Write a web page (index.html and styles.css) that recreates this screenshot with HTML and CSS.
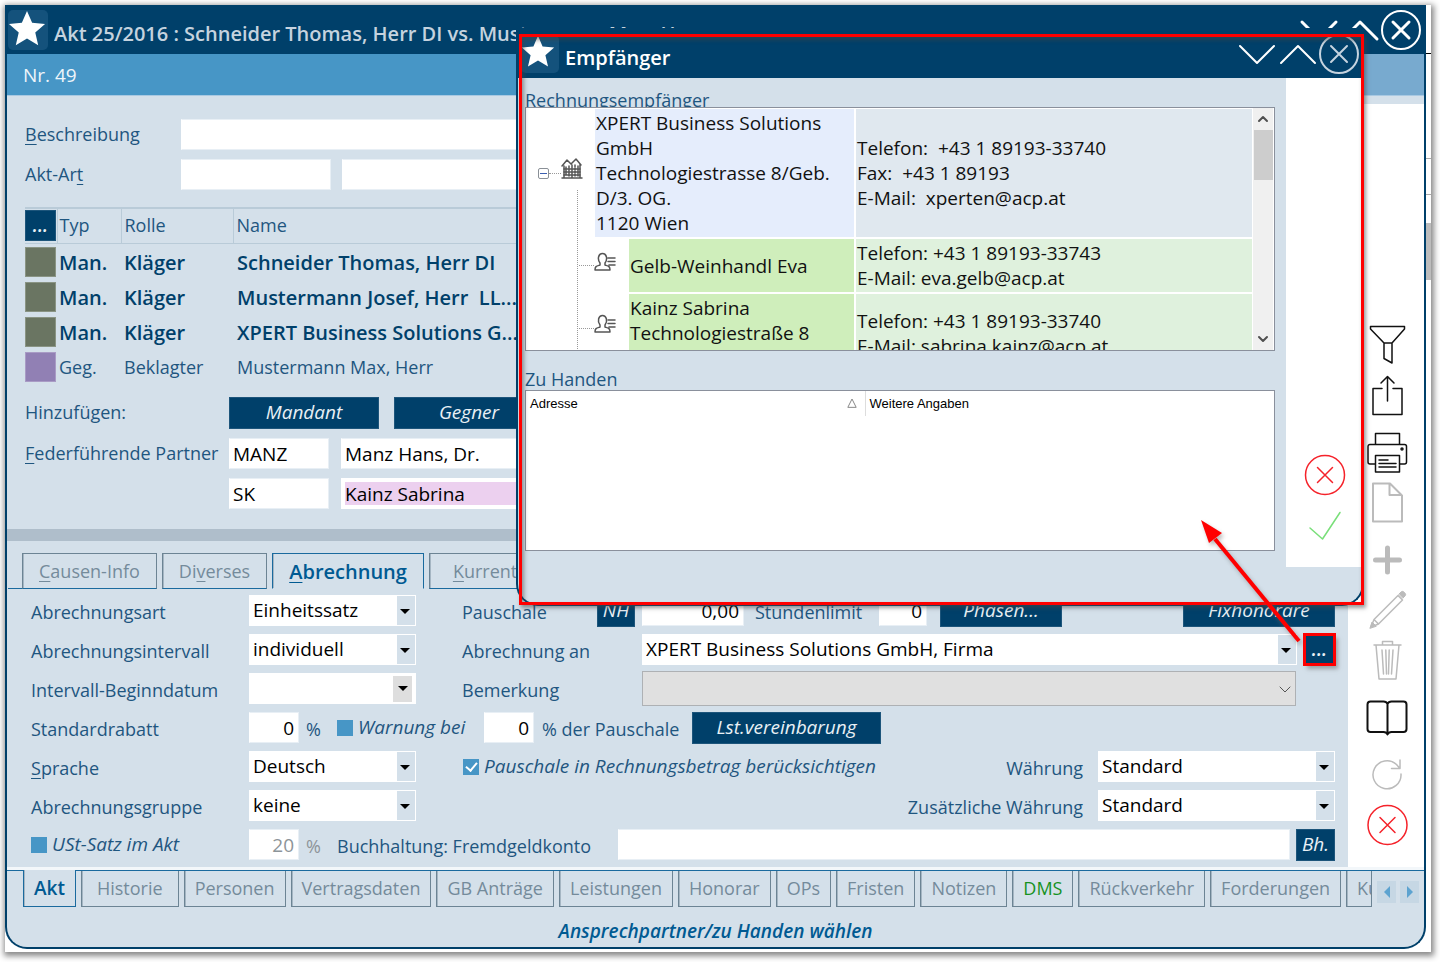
FILE: index.html
```html
<!DOCTYPE html>
<html lang="de">
<head>
<meta charset="utf-8">
<title>Akt 25/2016</title>
<link rel="stylesheet" href="styles.css">
</head>
<body>
<div class="desktop">
<main class="window">
  <header class="titlebar">
    <span class="star"><svg viewBox="0 0 40 40"><path d="M20 1l5.400 12.500 13.600 1.200-10.300 9 3.100 13.300-11.800-7-11.800 7 3.100-13.300-10.300-9 13.600-1.200z"/></svg></span>
    <h1>Akt 25/2016 : Schneider Thomas, Herr DI vs. Mustermann Max, Herr</h1>
    <div class="win-buttons bold">
      <button aria-label="Minimieren"><svg viewBox="0 0 40 40"><path d="M3 12l17 17 17-17"/></svg></button>
      <button aria-label="Maximieren"><svg viewBox="0 0 40 40"><path d="M3 29l17-17 17 17"/></svg></button>
      <button aria-label="Schließen"><svg viewBox="0 0 40 40"><circle cx="20" cy="20" r="19"/><path d="M12 12l16 16M28 12l-16 16"/></svg></button>
    </div>
  </header>
  <div class="numberbar"><span>Nr. 49</span><i></i></div>

  <div class="body">
    <div class="content">
      <section class="head-form">
        <div class="row"><label class="lab-a" for="beschr"><u>B</u>eschreibung</label><input id="beschr" class="grow"></div>
        <div class="row"><label class="lab-a" for="art">Akt-Ar<u>t</u></label><input id="art" class="w150"><input class="grow indent" aria-label="Akt-Art Text"></div>
        <table class="parties">
          <thead><tr><th><button class="btn square">...</button></th><th>Typ</th><th>Rolle</th><th>Name</th></tr></thead>
          <tbody>
            <tr class="strong"><td><i class="swatch"></i></td><td>Man.</td><td>Kläger</td><td>Schneider Thomas, Herr DI</td></tr>
            <tr class="strong"><td><i class="swatch"></i></td><td>Man.</td><td>Kläger</td><td>Mustermann Josef, Herr&nbsp; LL...</td></tr>
            <tr class="strong"><td><i class="swatch"></i></td><td>Man.</td><td>Kläger</td><td>XPERT Business Solutions G...</td></tr>
            <tr><td><i class="swatch violet"></i></td><td>Geg.</td><td>Beklagter</td><td>Mustermann Max, Herr</td></tr>
          </tbody>
        </table>
        <div class="row adds"><span class="lab-b">Hinzufügen:</span><button class="btn w150">Mandant</button><button class="btn w150 second">Gegner</button></div>
        <div class="row"><label class="lab-b" for="partner"><u>F</u>ederführende Partner</label><input id="partner" class="w100" value="MANZ"><input class="grow name" aria-label="Partner Name" value="Manz Hans, Dr."></div>
        <div class="row"><span class="lab-b"></span><input class="w100" aria-label="Sachbearbeiter" value="SK"><input class="grow name pink" aria-label="Sachbearbeiter Name" value="Kainz Sabrina"></div>
      </section>
      <div class="splitter"></div>
      <nav class="tabs top">
        <button><u>C</u>ausen-Info</button><button>Di<u>v</u>erses</button><button class="active"><u>A</u>brechnung</button><button class="far"><u>K</u>urrentien</button><i></i>
      </nav>
      <section class="billing">
        <div class="row">
          <label class="lab-c" for="f1">Abrechnungsart</label>
          <span class="select w166"><select id="f1"><option>Einheitssatz</option></select></span>
          <label class="lab-d short" for="f2">Pauschale</label><button class="btn nh">NH</button>
          <input id="f2" class="num w102" value="0,00"><label class="lab-e" for="f3">Stundenlimit</label><input id="f3" class="num w48" value="0">
          <button class="btn phases">Phasen...</button><button class="btn fix">Fixhonorare</button>
        </div>
        <div class="row">
          <label class="lab-c" for="f4">Abrechnungsintervall</label>
          <span class="select w166"><select id="f4"><option>individuell</option></select></span>
          <label class="lab-d" for="f5">Abrechnung an</label>
          <span class="select grow"><select id="f5"><option>XPERT Business Solutions GmbH, Firma</option></select></span>
          <button class="btn square marked">...</button>
        </div>
        <div class="row">
          <label class="lab-c" for="f6">Intervall-Beginndatum</label>
          <span class="select w166 date"><select id="f6"><option></option></select></span>
          <label class="lab-d" for="f7">Bemerkung</label>
          <span class="select grow gray"><select id="f7"><option></option></select><svg viewBox="0 0 12 8"><path d="M1 1l5 5 5-5"/></svg></span>
        </div>
        <div class="row">
          <label class="lab-c" for="f8">Standardrabatt</label>
          <input id="f8" class="num w50" value="0"><span class="pct">%</span>
          <label class="check warn"><input type="checkbox">Warnung bei</label>
          <input class="num w50" value="0" aria-label="Prozent der Pauschale"><span class="after">% der Pauschale</span>
          <button class="btn lst">Lst.vereinbarung</button>
        </div>
        <div class="row">
          <label class="lab-c" for="f9"><u>S</u>prache</label>
          <span class="select w166"><select id="f9"><option>Deutsch</option></select></span>
          <label class="check pausch"><input type="checkbox" checked>Pauschale in Rechnungsbetrag berücksichtigen</label>
          <label class="currency" for="f10">Währung</label>
          <span class="select w237"><select id="f10"><option>Standard</option></select></span>
        </div>
        <div class="row">
          <label class="lab-c" for="f11">Abrechnungsgruppe</label>
          <span class="select w166"><select id="f11"><option>keine</option></select></span>
          <label class="currency" for="f12">Zusätzliche Währung</label>
          <span class="select w237"><select id="f12"><option>Standard</option></select></span>
        </div>
        <div class="row last-row">
          <label class="check lab-c"><input type="checkbox">USt-Satz im Akt</label>
          <input class="num w50 off" value="20" aria-label="USt-Satz" disabled><span class="pct off">%</span>
          <label class="konto" for="f13">Buchhaltung: Fremdgeldkonto</label>
          <input id="f13" class="grow"><button class="btn bh">Bh.</button>
        </div>
      </section>
    </div>

    <aside class="toolbar">
      <div>
        <button aria-label="Filter"><svg viewBox="0 0 44 50"><path d="M5.500 4.500h34v2.500l-12.500 14v20l-8-4.500v-15.500l-13.500-14zM19 21h8"/></svg></button>
        <button aria-label="Export"><svg viewBox="0 0 44 50"><path d="M17 16.500H8V42.500H37V16.500H28M22.500 29V5M16 11l6.500-6.500 6.500 6.500"/></svg></button>
      </div>
      <div>
        <button aria-label="Drucken"><svg viewBox="0 0 44 50"><path d="M10.500 15.500V4.500h24v11M10.500 35H5a2 2 0 0 1-2-2V17.500a2 2 0 0 1 2-2h34.500a2 2 0 0 1 2 2V33a2 2 0 0 1-2 2h-5M10.500 26.500h24v16.500h-24zM14 31h9M14 34.500h17M14 38h17"/><circle cx="37" cy="20" r="1"/></svg></button>
        <button class="dim" aria-label="Neues Dokument"><svg viewBox="0 0 44 50"><path d="M8 4.500h17l12 12v26h-29zM24.500 4.500v11.500h12"/></svg></button>
      </div>
      <div>
        <button class="dim thick" aria-label="Hinzufügen"><svg viewBox="0 0 44 50"><path d="M22.500 12v24M10.500 24h24"/></svg></button>
        <button class="dim" aria-label="Bearbeiten"><svg viewBox="0 0 44 50"><path class="thin" d="M6 41l3-7.500 24-24 4.500 4.500-24 24zM9 33.500l4.500 4.500"/><path class="solid" d="M5 42l2-6 4 4zM34 8l2-2q1.500-1.500 3.500.5t.5 3.500l-2 2z"/></svg></button>
        <button class="dim" aria-label="Löschen"><svg viewBox="0 0 44 50"><path class="thin" d="M9 9h27M17.500 9v-3.500h10v3.500M11 9l3 34h17l3-34M17 14l1.500 24M20.800 14l.7 24M24.200 14l-.7 24M28 14l-1.500 24"/></svg></button>
      </div>
      <div>
        <button aria-label="Buch"><svg viewBox="0 0 44 50"><path class="book" d="M22.500 11q-1-2.500-4-2.500H5.500a3 3 0 0 0-3 3V36a3 3 0 0 0 3 3H18.500q3 0 4 2.500 1-2.500 4-2.500H38.500a3 3 0 0 0 3-3V11.500a3 3 0 0 0-3-3H26.500q-3 0-4 2.500V41"/></svg></button>
      </div>
      <div>
        <button class="dim" aria-label="Aktualisieren"><svg viewBox="0 0 44 50"><path class="thin" d="M36 24a14 14 0 1 1-4.500-9.500l3 3.500M35 10v8.500h-8.500"/></svg></button>
        <button class="red" aria-label="Abbrechen"><svg viewBox="0 0 44 50"><circle cx="22.500" cy="25" r="19.500"/><path d="M15 17.500l15 15M30 17.500l-15 15"/></svg></button>
      </div>
    </aside>
  </div>

  <footer class="foot">
    <nav class="tabs bottom">
      <button class="active">Akt</button><button class="wide">Historie</button><button>Personen</button><button>Vertragsdaten</button><button>GB Anträge</button><button>Leistungen</button><button>Honorar</button><button>OPs</button><button>Fristen</button><button>Notizen</button><button class="green">DMS</button><button>Rückverkehr</button><button>Forderungen</button><button class="cut">Kurrentien</button>
      <span class="pager"><button aria-label="Zurück"><i class="left"></i></button><button aria-label="Weiter"><i class="right"></i></button></span>
    </nav>
    <p>Ansprechpartner/zu Handen wählen</p>
  </footer>

  <section class="dialog" role="dialog" aria-label="Empfänger">
    <header class="dialog-title">
      <span class="star small"><svg viewBox="0 0 40 40"><path d="M20 1l5.400 12.500 13.600 1.200-10.300 9 3.100 13.300-11.800-7-11.800 7 3.100-13.300-10.300-9 13.600-1.200z"/></svg></span>
      <h2>Empfänger</h2>
      <div class="win-buttons">
        <button aria-label="Minimieren"><svg viewBox="0 0 40 40"><path d="M3 12l17 17 17-17"/></svg></button>
        <button aria-label="Maximieren"><svg viewBox="0 0 40 40"><path d="M3 29l17-17 17 17"/></svg></button>
        <button class="soft" aria-label="Schließen"><svg viewBox="0 0 40 40"><circle cx="20" cy="20" r="19"/><path d="M12 12l16 16M28 12l-16 16"/></svg></button>
      </div>
    </header>
    <div class="dialog-body">
      <div class="dialog-main">
        <h3 class="clip">Rechnungsempfänger</h3>
        <div class="listbox">
          <div class="tree">
            <div class="node root">
              <span class="gutter"><i class="minus"></i><i class="dots"></i>
                <svg class="house" viewBox="0 0 22 24"><path d="M1 9l5-6 4 4 5-5 5 6M3 9v12M19 7v14M11 8v13M1 21h20"/><path class="bricks" d="M5 10v9M8 9v10M14 8v11M17 9v10M3 12h16M3 15h16M3 18h16"/></svg></span>
              <span class="cell blue">XPERT Business Solutions GmbH<br>Technologiestrasse 8/Geb. D/3. OG.<br>1120 Wien</span>
              <span class="cell steel">Telefon:&nbsp; +43 1 89193-33740<br>Fax:&nbsp; +43 1 89193<br>E-Mail:&nbsp; xperten@acp.at</span>
            </div>
            <div class="node child">
              <span class="gutter"><i class="dots"></i><svg class="person" viewBox="0 0 22 20"><path d="M1 18c0-4 2-4 5-5v-2c-3-4-1.500-9.500 2.500-9.500s5.500 5.500 2.500 9.500v2c3 1 5 1 5 5zM14 6h7M14 9.500h7M15 13h6"/></svg></span>
              <span class="cell green">Gelb-Weinhandl Eva</span>
              <span class="cell mint">Telefon: +43 1 89193-33743<br>E-Mail: eva.gelb@acp.at</span>
            </div>
            <div class="node child last">
              <span class="gutter"><i class="dots"></i><svg class="person" viewBox="0 0 22 20"><path d="M1 18c0-4 2-4 5-5v-2c-3-4-1.500-9.500 2.500-9.500s5.500 5.500 2.500 9.500v2c3 1 5 1 5 5zM14 6h7M14 9.500h7M15 13h6"/></svg></span>
              <span class="cell green">Kainz Sabrina<br>Technologiestraße 8</span>
              <span class="cell mint">Telefon: +43 1 89193-33740<br>E-Mail: sabrina.kainz@acp.at</span>
            </div>
          </div>
          <div class="scroll"><svg viewBox="0 0 12 8"><path d="M2 6l4-4 4 4"/></svg><i></i><svg viewBox="0 0 12 8"><path d="M2 2l4 4 4-4"/></svg></div>
        </div>
        <h3>Zu Handen</h3>
        <div class="grid-box">
          <table class="contacts"><thead><tr><th>Adresse<svg viewBox="0 0 10 10"><path d="M1 9l4-8 4 8z"/></svg></th><th>Weitere Angaben</th></tr></thead></table>
        </div>
      </div>
      <div class="dialog-side">
        <button class="red" aria-label="Abbrechen"><svg viewBox="0 0 44 50"><circle cx="22" cy="25" r="19.500"/><path d="M14.500 17.500l15 15M29.500 17.500l-15 15"/></svg></button>
        <button class="ok" aria-label="Bestätigen"><svg viewBox="0 0 44 50"><path d="M7 28l12.500 11L37 12.500"/></svg></button>
      </div>
    </div>
    <div class="frame"></div>
  </section>
  <svg class="arrow" viewBox="0 0 104 126"><path class="shaft" d="M100 122L16 20"/><path class="head" d="M2 1l21 13-13 10z"/></svg>
</main>
<div class="edge"><i class="line"></i><i class="pair"></i><i class="single"></i><i class="thumb"></i></div>
</div>
</body>
</html>
```
FILE: styles.css
```css
* { box-sizing: border-box; }
body {
  margin: 0;
  padding: 5px 9px 11px 5px;
  background: #fff;
  color: #1f5680;
  font: 18px/25px "Open Sans", "Noto Sans", sans-serif;
}
button, input, select { font: inherit; color: inherit; border: 0; border-radius: 0; margin: 0; padding: 0; background: none; }
h1, h2, h3, p { margin: 0; font-size: inherit; font-weight: 400; }
svg { display: block; fill: none; stroke: currentColor; stroke-linecap: round; stroke-linejoin: round; }
u { text-underline-offset: 3px; text-decoration-thickness: 1px; }

.desktop { display: flex; background: #fff; box-shadow: 1px 2px 6px 2px #888; padding-bottom: 3px; }
.window {
  position: relative;
  flex: 1;
  min-width: 0;
  background: #d4e0ea;
  border: 2px solid #00406a;
  border-top: 0;
  border-radius: 0 0 22px 22px;
}
.edge { width: 5px; display: flex; flex-direction: column; }
.edge .line { height: 49px; border-bottom: 1px solid #000; }
.edge .pair { height: 105px; border-bottom: 1px solid #aaa; }
.edge .single { height: 36px; border-bottom: 1px solid #aaa; }
.edge .thumb { height: 57px; margin-top: 28px; background: #bcbcbc; }

.titlebar { display: flex; align-items: center; height: 49px; margin: 0 -2px; padding: 0 5px 0 3px; background: #00406a; color: #c5d3df; }
.titlebar h1 { flex: 1; margin-left: 6px; padding-top: 8px; font-size: 20px; font-weight: 600; white-space: nowrap; overflow: hidden; }
.star { flex: none; width: 40px; height: 40px; border-radius: 5px; background: #14527c; }
.star svg { fill: #fff; stroke: none; width: 38px; height: 38px; }
.star.small { width: 38px; height: 38px; }
.star.small svg { width: 34px; height: 34px; }
.win-buttons { display: flex; color: #fff; gap: 1px; }
.win-buttons button { width: 40px; height: 40px; }
.win-buttons svg { stroke-width: 2; }
.win-buttons.bold svg { stroke-width: 3; }
.win-buttons.bold circle { stroke-width: 2; }
.win-buttons .soft { color: #c5d3df; }

.numberbar { display: flex; justify-content: space-between; height: 42px; font-size: 19px; background: #4796c6; color: #eef5fa; border-bottom: 1px solid #a9c9e2; }
.numberbar span { padding: 9px 16px; }
.numberbar i { width: 62px; background: #78aacf; }

.body { display: flex; }
.content { flex: 1; min-width: 0; }
.row { display: flex; align-items: center; height: 31px; }
.row > * { flex: none; }
.row > .grow { flex: 1; min-width: 0; }
input:not([type]) { height: 31px; padding: 0 3px; font-size: 19px; background: #fff; color: #000; border: 1px solid #e8eff5; border-left-color: #fff; }
input.num { text-align: right; padding-right: 4px; }
input.off, .off { color: #8d9499; }
.w150 { width: 150px; }
.w100 { width: 100px; }
.w102 { width: 102px; }
.w50 { width: 50px; }
.w48 { width: 48px; }
.w166 { width: 167px; }
.w237 { width: 237px; }

.head-form { display: flex; flex-direction: column; gap: 9px; padding: 23px 13px 20px 18px; }
.lab-a { width: 156px; }
.lab-b { width: 204px; white-space: nowrap; }
input.indent { margin-left: 11px; }
input.name { margin-left: 12px; }
input.pink { background: #ecd0ef; border: 4px solid #fff; padding: 0; }
.parties { width: 100%; margin-top: 8px; border-collapse: collapse; table-layout: fixed; }
.parties th { height: 35px; padding: 0 3px; text-align: left; font-weight: 400; border: 1px solid #b9cbd8; border-width: 2px 1px 1px 0; }
.parties th:nth-child(1) { width: 32px; padding: 0; }
.parties th:nth-child(2) { width: 64px; padding-left: 2px; }
.parties th:nth-child(3) { width: 112px; }
.parties td { height: 35px; padding: 3px 3px 0; white-space: nowrap; }
.parties td:nth-child(1) { padding: 3px 0 0; }
.parties td:nth-child(2) { padding-left: 2px; }
.parties td:nth-child(4) { padding-left: 4px; }
.swatch { display: block; width: 31px; height: 30px; background: #6a7562; border: 1px solid #8a9484; }
.swatch.violet { background: #9180b4; border-color: #a99bc5; }
.strong { color: #00406a; font-size: 20px; font-weight: 600; }
.adds { margin-top: 5px; margin-bottom: 1px; }
.btn { height: 32px; background: #00406a; color: #e9f0f5; font-size: 19px; font-style: italic; border: 1px solid #1d557b; white-space: nowrap; }
.btn.square { display: block; width: 31px; height: 31px; font-weight: 600; }
.btn.second { margin-left: 15px; }
.splitter { height: 12px; background: #afbecb; }

.tabs { display: flex; color: #748b9b; }
.tabs button { height: 36px; border: 1px solid #6c8494; white-space: nowrap; }
.tabs.top { margin-top: 12px; padding-left: 1px; }
.tabs.top button { border-bottom-color: #1a6a9e; box-shadow: inset 1px 0 #a5b6c3; margin-right: 5px; padding: 0 16px; }
.tabs.top::before { content: ""; width: 14px; border-bottom: 1px solid #1a6a9e; }
.tabs.top i { flex: 1; border-bottom: 1px solid #1a6a9e; }
.tabs.top .active { font-size: 20px; border-bottom-color: transparent; }
.tabs.top .far { padding: 0 23px; }
.tabs .active { color: #005a92; border-color: #1a6a9e; font-size: 19px; font-weight: 600; }
.billing { display: flex; flex-direction: column; gap: 8px; padding: 6px 13px 7px 24px; }
.lab-c { width: 218px; padding-top: 3px; white-space: nowrap; }
.lab-d { width: 180px; padding-top: 3px; }
.row > .lab-d { margin-left: 46px; }
.lab-d.short { width: 135px; }
.nh { width: 38px; margin-right: 7px; }
.lab-e { width: 135px; padding: 3px 0 0 11px; }
.phases { width: 122px; margin-left: 13px; }
.fix { width: 152px; margin-left: auto; }
.select { position: relative; height: 31px; background: #fff; }
.select select { appearance: none; width: 100%; height: 31px; padding: 0 28px 1px 4px; font-size: 19px; color: #000; background: linear-gradient(#d4e0ea, #d4e0ea) right 1px center / 18px 29px no-repeat; }
.select::after { content: ""; position: absolute; right: 6px; top: 14px; border: 5px solid transparent; border-top-color: #000; border-bottom: 0; pointer-events: none; }
.select.date select { background: linear-gradient(#dedede, #dedede) right 4px center / 19px 26px no-repeat; }
.select.date::after { right: 8px; top: 13px; }
.row > .select.gray { margin-right: 39px; height: 35px; border: 1px solid #aeb1b4; background: #e0e0e0; }
.select.gray select { background: none; }
.select.gray::after { display: none; }
.select.gray svg { position: absolute; right: 4px; top: 14px; width: 12px; height: 8px; color: #555; }
.marked { margin-left: 7px; outline: 3px solid #f00; outline-offset: -2px; box-shadow: 3px 4px 4px #7779; }
.pct { width: 38px; padding: 3px 0 0 7px; }
.check { display: flex; align-items: center; font-size: 19px; font-style: italic; white-space: nowrap; padding: 0; }
.check input { appearance: none; width: 16px; height: 16px; margin-right: 5px; background: #4796c6; }
.check input:checked::after { content: ""; display: block; width: 5px; height: 9px; margin: 1px 0 0 5px; border: solid #fff; border-width: 0 2px 2px 0; transform: rotate(40deg); }
.warn { width: 147px; }
.after { padding: 3px 0 0 8px; width: 158px; white-space: nowrap; }
.lst { width: 189px; }
.pausch { margin-left: 47px; }
.currency { margin-left: auto; margin-right: 15px; padding-top: 3px; }
.konto { width: 281px; padding-top: 3px; }
.bh { width: 39px; margin-left: 6px; }

.toolbar { display: flex; flex-direction: column; justify-content: flex-end; gap: 7px; width: 76px; margin-top: 8px; padding: 0 15px 17px 17px; background: #fff; color: #111; }
.toolbar button, .dialog-side button { display: block; width: 44px; height: 50px; }
.toolbar svg, .dialog-side svg { width: 44px; height: 50px; stroke-width: 1.500; }
.toolbar .dim { color: #bbb; }
.toolbar .dim svg { stroke-width: 2; }
.toolbar .thick svg { stroke-width: 5; }
.toolbar .dim .thin { stroke-width: 1.500; }
.toolbar .book { stroke-width: 2; }
.toolbar .dim .solid { fill: currentColor; stroke-width: 1; }
.red { color: #f5222a; }
.ok { color: #79df79; }

.foot { border-top: 3px solid #f3f7fa; height: 80px; }
.tabs.bottom { padding-left: 16px; gap: 5px; border-top: 1px solid #1a6a9e; }
.tabs.bottom > button { border-top: 0; padding: 0 10px; box-shadow: inset 1px 0 #a5b6c3; flex: none; }
.tabs.bottom > .wide { padding: 0 15px; }
.tabs.bottom > .active { margin-top: -1px; height: 37px; background: #d4e0ea; }
.tabs .green { color: #16921f; }
.tabs.bottom > .cut { flex: 1 1 0; min-width: 0; overflow: hidden; text-align: left; padding: 0 0 0 10px; }
.pager { display: flex; flex: none; gap: 4px; margin: 10px 5px 0 0; }
.tabs .pager button { display: flex; align-items: center; justify-content: center; width: 19px; height: 22px; border: 0; background: #c6d7e4; }
.pager i { border: 6px solid transparent; }
.pager .left { border-right-color: #5da3d0; border-left: 0; }
.pager .right { border-left-color: #5da3d0; border-right: 0; }
.foot p { margin-top: 12px; text-align: center; font-style: italic; font-weight: 600; font-size: 19px; color: #005a92; }

.dialog { position: absolute; left: 509px; right: 60px; top: 23px; background: #d4e0ea; border: 2px solid #00406a; border-top: 0; border-radius: 0 0 22px 22px; }
.dialog-title { display: flex; align-items: center; height: 50px; margin: 0 -2px; padding: 1px 5px 0 5px; background: #00406a; color: #fff; }
.dialog-title h2 { flex: 1; margin-left: 6px; padding-top: 8px; font-size: 20px; font-weight: 600; }
.dialog-body { display: flex; margin-bottom: 37px; }
.dialog-main { flex: 1; min-width: 0; padding: 9px 11px 16px 7px; }
.dialog-main h3 { height: 39px; padding-top: 16px; }
.dialog-main h3.clip { height: 20px; padding: 1px 0 0; overflow: hidden; }
.listbox { display: flex; height: 244px; border: 1px solid #8a909c; background: #fff; color: #111; font-size: 19px; overflow: hidden; }
.tree { flex: 1; min-width: 0; display: flex; flex-direction: column; gap: 2px; padding-top: 1px; background: repeating-linear-gradient(#999 0 1px, #fff 1px 2px) 51px 82px / 1px 100% no-repeat; }
.node { display: flex; flex: none; gap: 2px; }
.gutter { display: flex; align-items: center; flex: none; width: 67px; }
.child .gutter { width: 101px; padding-left: 53px; }
.cell { padding: 2px 1px 0; }
.cell:nth-child(2) { flex: none; width: 259px; }
.child .cell:nth-child(2) { width: 225px; }
.cell:nth-child(3) { flex: 1; }
.root .cell { min-height: 128px; }
.root .cell.steel { padding-top: 27px; }
.child .cell { min-height: 53px; }
.child .cell.green { padding-top: 15px; }
.last .cell { min-height: 68px; }
.last .cell.green { padding-top: 2px; }
.last .cell.mint { padding-top: 15px; }
.blue { background: #e5edfc; }
.steel { background: #e0e8ef; }
.cell.green { background: #cfeebb; }
.mint { background: #dff1dd; }
.minus { width: 11px; height: 11px; margin-left: 12px; border: 1px solid #8a9097; border-radius: 2px; background: linear-gradient(#3b5fb0, #3b5fb0) center / 7px 1px no-repeat; }
.dots { width: 12px; border-top: 1px dotted #999; }
.child .dots { width: 15px; }
.house { width: 22px; height: 24px; color: #555; margin-bottom: 8px; stroke-width: 1.500; }
.bricks { stroke-dasharray: 2 1; }
.person { width: 22px; height: 20px; color: #555; margin-bottom: 8px; stroke-width: 1.500; }
.scroll { display: flex; flex-direction: column; align-items: center; width: 20px; margin: 0 1px; background: #f0f0f0; color: #505050; }
.scroll svg { width: 12px; height: 8px; margin: 7px 0; stroke-width: 2; }
.scroll i { width: 19px; height: 50px; margin-bottom: auto; background: #cdcdcd; }
.grid-box { height: 161px; border: 1px solid #8a909c; background: #fff; }
.contacts { width: 100%; border-collapse: collapse; font: 13px/25px "Liberation Sans", Arial, sans-serif; color: #000; }
.contacts th { height: 25px; padding: 0 4px; text-align: left; font-weight: 400; }
.contacts th:first-child { width: 339px; border-right: 1px solid #ddd; }
.contacts svg { float: right; width: 10px; height: 10px; margin: 7px 4px 0 0; color: #888; }
.dialog-side { display: flex; flex-direction: column; justify-content: flex-end; width: 76px; padding: 0 15px 17px 17px; background: #fff; }
.frame { position: absolute; inset: 6px -2px -1px 1px; border: 3px solid #f00; box-shadow: 2px 3px 4px #4448, inset 2px 3px 4px #4448; pointer-events: none; }
.arrow { position: absolute; right: 121px; top: 514px; width: 104px; height: 126px; stroke: none; filter: drop-shadow(2px 3px 2px #6667); pointer-events: none; }
.arrow .shaft { stroke: #f00; stroke-width: 4; stroke-linecap: butt; }
.arrow .head { fill: #f00; }
```
